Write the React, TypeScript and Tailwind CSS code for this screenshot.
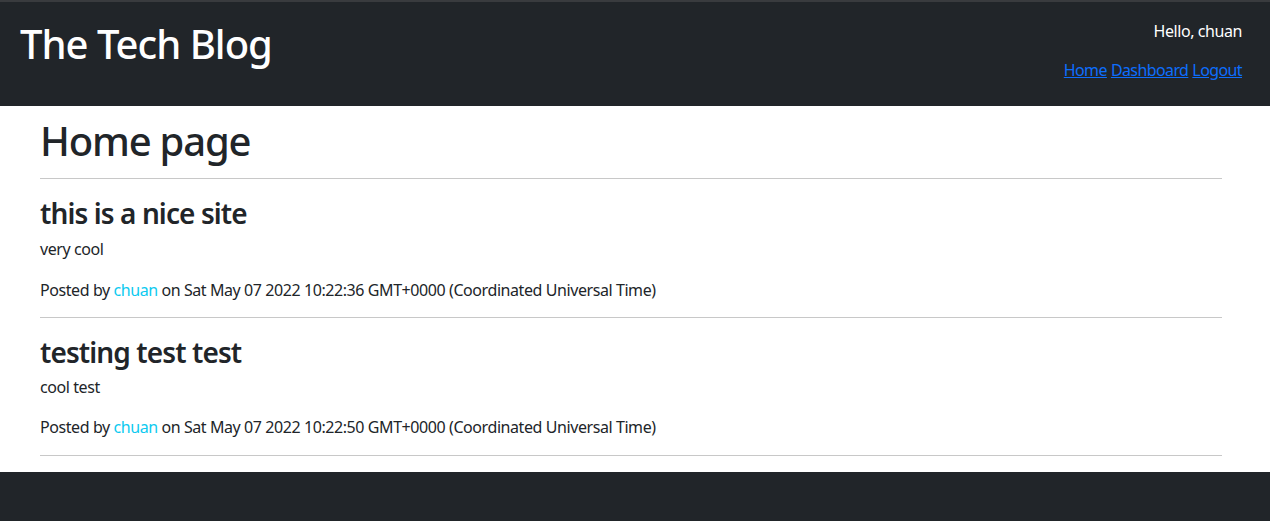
import React from 'react';

const font = { fontFamily: '"Noto Sans", "Open Sans", sans-serif' };

const posts = [
  { title: 'this is a nice site', body: 'very cool', author: 'chuan', date: 'Sat May 07 2022 10:22:36 GMT+0000 (Coordinated Universal Time)' },
  { title: 'testing test test', body: 'cool test', author: 'chuan', date: 'Sat May 07 2022 10:22:50 GMT+0000 (Coordinated Universal Time)' },
];

export default function App() {
  return (
    <div className="min-h-[521px] bg-[#212529] text-[#212529] tracking-[-0.42px]" style={font}>
      <header className="h-[106px] border-t-2 border-[#393b3e] flex justify-between px-5 pr-7 text-white">
        <h1 className="text-[40px] leading-[48px] font-medium tracking-[-1px] mt-[18px]">The Tech Blog</h1>
        <div className="flex flex-col items-end text-[16px] leading-6">
          <div className="mt-[17px]">Hello, chuan</div>
          <nav className="mt-[15px] flex gap-[4px] tracking-[-0.6px]">
            <a href="#" className="text-[#0d6efd] underline">Home</a>
            <a href="#" className="text-[#0d6efd] underline">Dashboard</a>
            <a href="#" className="text-[#0d6efd] underline">Logout</a>
          </nav>
        </div>
      </header>
      <main className="bg-white pl-10 pr-12 pt-[11px] pb-4">
        <h1 className="text-[40px] leading-[48px] font-medium tracking-[-1.2px]">Home page</h1>
        <hr className="mt-[13px] border-t border-[#c8c8c8]" />
        {posts.map((p, i) => (
          <article key={p.title}>
            <h2 className="mt-[17px] text-[28px] leading-[34px] font-semibold tracking-[-0.9px]">{p.title}</h2>
            <p className={i === 0 ? 'mt-[7px] text-[16px] leading-6' : 'mt-[6px] text-[16px] leading-6'}>{p.body}</p>
            <p className={i === 0 ? 'mt-[17px] text-[16px] leading-6' : 'mt-4 text-[16px] leading-6'}>
              Posted by <a href="#" className="text-[#0dcaf0]">{p.author}</a> on {p.date}
            </p>
            <hr className={i === 0 ? 'mt-[15px] border-t border-[#c8c8c8]' : 'mt-4 border-t border-[#c8c8c8]'} />
          </article>
        ))}
      </main>
    </div>
  );
}
